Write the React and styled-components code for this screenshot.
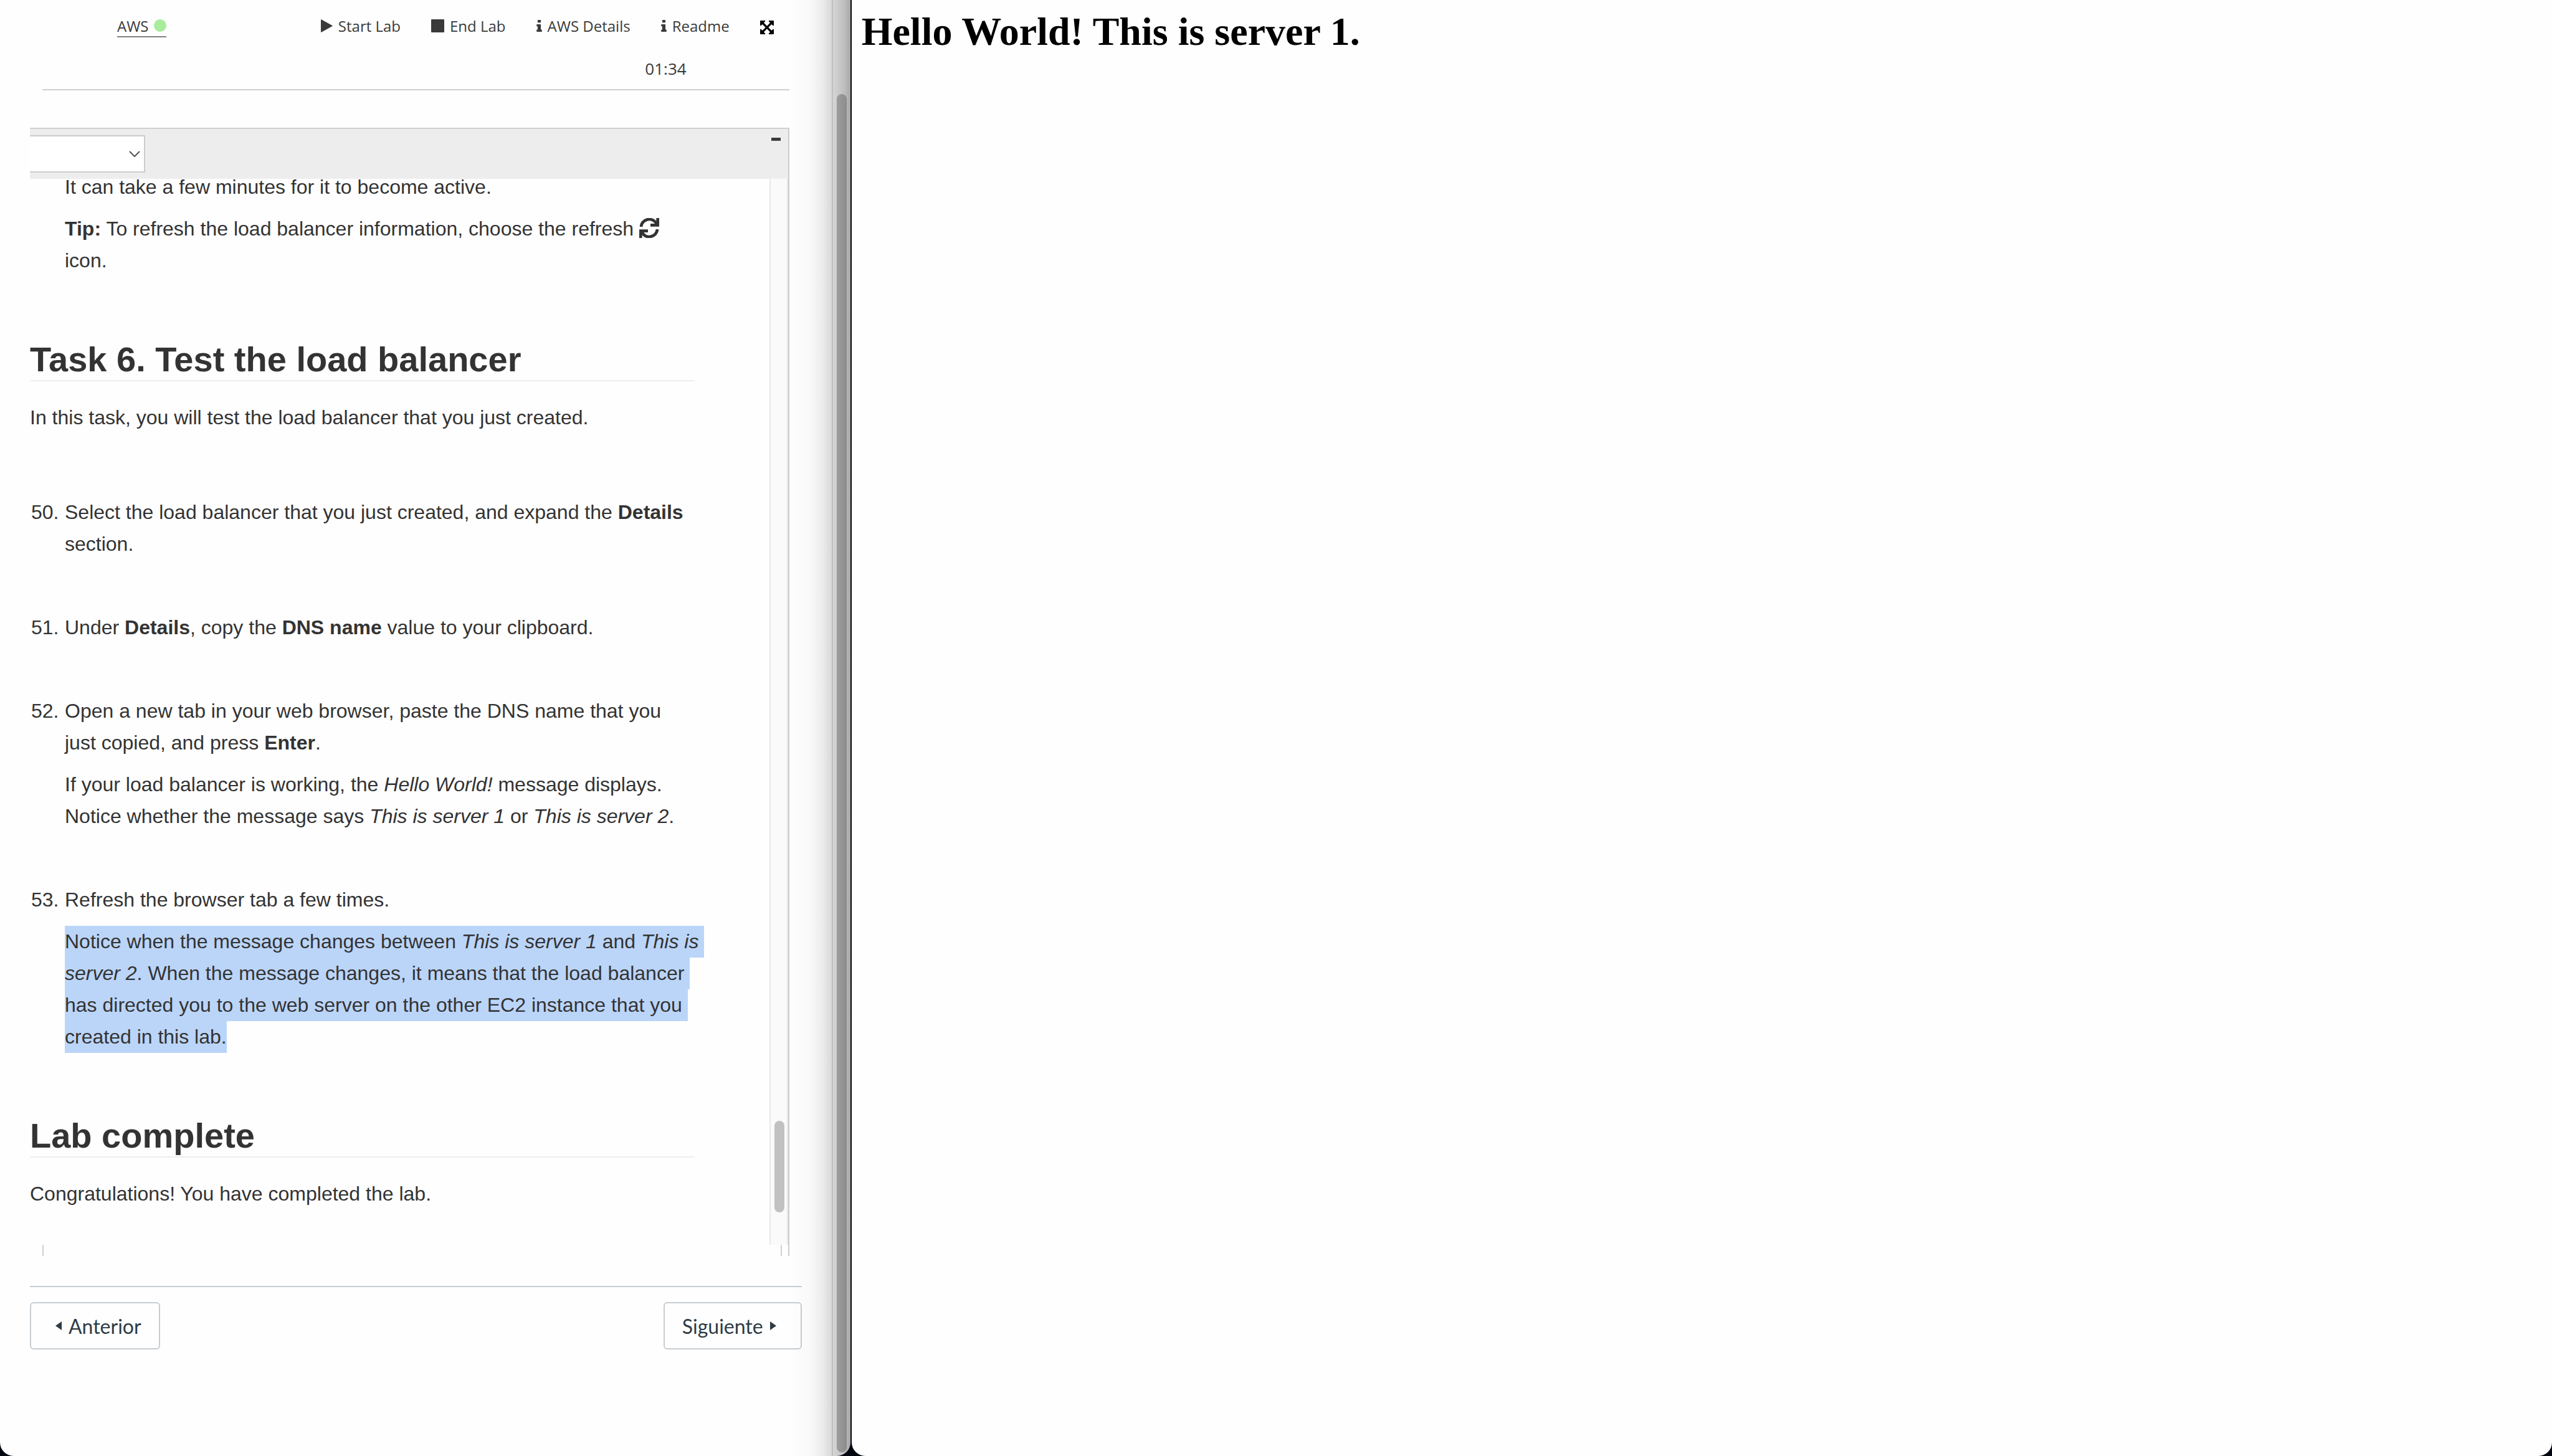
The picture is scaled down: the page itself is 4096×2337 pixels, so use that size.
import React, { useEffect, useRef } from "react";
import styled, { createGlobalStyle } from "styled-components";

const Global = createGlobalStyle`
  *, *::before, *::after { box-sizing: border-box; }
  html, body { margin: 0; padding: 0; background: #02060f; }
  body { overflow: hidden; }
`;

const Desktop = styled.div`
  display: grid;
  grid-template-columns: minmax(0, 1fr) minmax(0, 2fr);
  column-gap: 2px;
  height: 100vh;
  background: #02060f;
`;

const Window = styled.div`
  min-width: 0;
  overflow: hidden;
  background: #fefefe;
  border-radius: 0 0 22px 22px;
`;

const LabWindow = styled(Window)`
  display: flex;
  position: relative;
  font-family: "Liberation Sans", Arial, sans-serif;
  color: #333;
`;

/* shadow that the front window casts on the lab window */
const Shade = styled.div`
  position: absolute;
  top: 0;
  right: 0;
  bottom: 0;
  width: 100px;
  pointer-events: none;
  background: linear-gradient(to right, rgba(0,0,0,0), rgba(0,0,0,0.02) 35%, rgba(0,0,0,0.07) 55%, rgba(0,0,0,0.15) 70%, rgba(0,0,0,0.25) 90%, rgba(0,0,0,0.34));
`;

const LabPage = styled.main`
  flex: 1;
  min-width: 0;
  display: flex;
  flex-direction: column;
  padding: 0 48px;
`;

const OuterTrack = styled.div`
  flex: none;
  display: flex;
  width: 30px;
  padding: 151px 6px 6px;
  border-left: 2px solid #e2e2e2;
`;

const Thumb = styled.div`
  width: 16px;
  height: ${(p) => p.$height};
  border-radius: 8px;
  background: #c1c1c1;
`;

const LabHeader = styled.header`
  height: 145px;
  margin: 0 20px;
  border-bottom: 2px solid #d0d0d0;
  font-family: "Open Sans", "Noto Sans", sans-serif;
  font-size: 24px;
  color: #3a3a3a;
`;

const Bar = styled.nav`
  display: flex;
  align-items: flex-start;
  gap: 49px;
  padding: 24px 25px 0 120px;
`;

const AwsLink = styled.a`
  display: flex;
  align-items: center;
  gap: 8px;
  height: 36px;
  margin-right: auto;
  border-bottom: 2px solid #808080;
  color: inherit;
  text-decoration: none;
`;

const Dot = styled.span`
  width: 20px;
  height: 20px;
  border-radius: 50%;
  background: #a8ec9c;
`;

const BarButton = styled.button`
  display: flex;
  align-items: center;
  gap: 9px;
  height: 36px;
  padding: 0 0 2px;
  border: 0;
  background: none;
  font: inherit;
  color: inherit;
`;

const FullScreenButton = styled(BarButton)`
  height: 40px;
  padding: 0;
  color: #000;
`;

const Icon = styled.svg`
  display: block;
  flex: none;
  fill: currentColor;
`;

const Timer = styled.div`
  padding: 30px 165px 0 0;
  font-size: 26px;
  line-height: 32px;
  text-align: right;
`;

const Panel = styled.section`
  display: flex;
  flex-direction: column;
  margin: 60px 20px 0 0;
  border-right: 2px solid #ccc;
`;

const PanelBar = styled.div`
  display: flex;
  justify-content: space-between;
  align-items: flex-start;
  height: 82px;
  padding: 10px 9px 10px 0;
  background: #ededed;
  border-top: 2px solid #d0d0d0;
`;

const SelectWrap = styled.label`
  position: relative;
  width: 185px;
  height: 60px;
`;

const Select = styled.select`
  width: 100%;
  height: 100%;
  appearance: none;
  border: 2px solid #ccc;
  border-left: 0;
  border-radius: 0;
  background: #fff;
`;

const Chevron = styled.svg`
  position: absolute;
  right: 7px;
  top: 24px;
  width: 20px;
  height: 12px;
  pointer-events: none;
`;

const Collapse = styled.button`
  width: 21px;
  height: 13px;
  padding: 4px 3px;
  border: 0;
  background: #3a3a3a content-box;
`;

const Scroller = styled.div`
  display: flex;
  height: 1711px;
  overflow: hidden;
`;

const Article = styled.article`
  flex: 1;
  min-width: 0;
  margin-top: -12px;
  padding-right: 120px;
  font-size: 32px;
  line-height: 51px;
`;

const InnerTrack = styled.div`
  display: flex;
  align-items: flex-end;
  width: 30px;
  padding: 0 4px 52px 6px;
  border: solid #e8e8e8;
  border-width: 0 2px;
  background: #fafafa;
`;

const Text = styled.p`
  margin: 0 0 16px;
`;

const SelectedText = styled(Text)`
  margin-right: -12px;

  &::selection, & *::selection {
    background: rgba(186, 212, 249, 0.99);
    color: #333;
  }
`;

const Indented = styled.div`
  padding-left: 56px;
`;

const RefreshSvg = styled.svg`
  width: 32px;
  height: 32px;
  vertical-align: -4px;
  fill: none;
  stroke: #333;
  stroke-width: 14;
`;

const Title = styled.h2`
  margin: 100px 0 33px;
  border-bottom: 2px solid #eee;
  font-size: 56px;
  line-height: 66px;
  font-weight: 700;
`;

const Steps = styled.ol`
  margin: 101px 0 0;
  padding: 0;
  list-style: none;
  display: flex;
  flex-direction: column;
  gap: 83px;
`;

const Step = styled.li`
  display: grid;
  grid-template-columns: 56px minmax(0, 1fr);

  ${Text}:last-child { margin-bottom: 0; }
`;

const Num = styled.span`
  padding-left: 2px;
`;

const Ticks = styled.div`
  height: 18px;
  margin: 0 10px 0 20px;
  border: solid #d0d0d0;
  border-width: 0 2px;
`;

const Pager = styled.footer`
  display: flex;
  justify-content: space-between;
  margin-top: 48px;
  padding-top: 24px;
  border-top: 2px solid #c7cdd1;
`;

const PagerLink = styled.a`
  display: flex;
  align-items: center;
  gap: 11px;
  height: 76px;
  padding: ${(p) => (p.$next ? "0 39px 0 28px" : "0 28px 0 39px")};
  border: 2px solid #c7cdd1;
  border-radius: 6px;
  color: #2d3b45;
  font-family: Lato, sans-serif;
  font-size: 32px;
  text-decoration: none;
`;

const ServerTitle = styled.h1`
  margin: 0;
  padding: 14px 16px;
  font-family: "Liberation Serif", "Times New Roman", serif;
  font-size: 64px;
  line-height: 74px;
  color: #000;
`;

const PlayIcon = () => (
  <Icon width="19" height="21" viewBox="0 0 19 21"><path d="M0 .8Q0 0 .8.3L18.4 9.9q.8.6 0 1.2L.8 20.7Q0 21 0 20.2z" /></Icon>
);

const StopIcon = () => (
  <Icon width="21" height="21" viewBox="0 0 21 21"><rect width="21" height="21" rx="1" /></Icon>
);

const InfoIcon = () => (
  <Icon width="9" height="19" viewBox="0 128 640 1408">
    <path d="M640 1344v128q0 26-19 45t-45 19h-512q-26 0-45-19t-19-45v-128q0-26 19-45t45-19h64v-384h-64q-26 0-45-19t-19-45v-128q0-26 19-45t45-19h384q26 0 45 19t19 45v576h64q26 0 45 19t19 45zm-128-1152v192q0 26-19 45t-45 19h-256q-26 0-45-19t-19-45v-192q0-26 19-45t45-19h256q26 0 45 19t19 45z" />
  </Icon>
);

const ExpandIcon = () => (
  <Icon width="22" height="22" viewBox="128 128 1536 1536">
    <path d="M1411 541l-355 355 355 355 144-144q29-31 70-14 39 17 39 59v448q0 26-19 45t-45 19h-448q-42 0-59-40-17-39 14-69l144-144-355-355-355 355 144 144q31 30 14 69-17 40-59 40h-448q-26 0-45-19t-19-45v-448q0-42 40-59 39-17 69 14l144 144 355-355-355-355-144 144q-19 19-45 19-12 0-24-5-40-17-40-59v-448q0-26 19-45t45-19h448q42 0 59 40 17 39-14 69l-144 144 355 355 355-355-144-144q-31-30-14-69 17-40 59-40h448q26 0 45 19t19 45v448q0 42-39 59-13 5-25 5-26 0-45-19z" />
  </Icon>
);

const RefreshIcon = () => (
  <RefreshSvg viewBox="0 0 96 96" role="img" aria-label="refresh">
    <path d="M9 42A39 39 0 0 1 84 30M89 0V34H54" />
    <path d="M87 54A39 39 0 0 1 12 66M7 96V62H42" />
  </RefreshSvg>
);

const LeftArrow = () => (
  <Icon width="10" height="14" viewBox="0 0 10 14"><path d="M10 0v14L0 7z" /></Icon>
);

const RightArrow = () => (
  <Icon width="10" height="14" viewBox="0 0 10 14"><path d="M0 0v14l10-7z" /></Icon>
);

export default function App() {
  const selected = useRef(null);

  useEffect(() => {
    window.getSelection().selectAllChildren(selected.current);
  }, []);

  return (
    <Desktop>
      <Global />
      <LabWindow>
        <LabPage>
          <LabHeader>
            <Bar>
              <AwsLink href="#aws">AWS <Dot /></AwsLink>
              <BarButton><PlayIcon />Start Lab</BarButton>
              <BarButton><StopIcon />End Lab</BarButton>
              <BarButton><InfoIcon />AWS Details</BarButton>
              <BarButton><InfoIcon />Readme</BarButton>
              <FullScreenButton aria-label="Full screen"><ExpandIcon /></FullScreenButton>
            </Bar>
            <Timer>01:34</Timer>
          </LabHeader>
          <Panel>
            <PanelBar>
              <SelectWrap>
                <Select aria-label="Language" />
                <Chevron viewBox="0 0 20 12" fill="none" stroke="#555" strokeWidth="2">
                  <path d="M2 2l8 8 8-8" />
                </Chevron>
              </SelectWrap>
              <Collapse aria-label="Collapse" />
            </PanelBar>
            <Scroller>
              <Article>
                <Indented>
                  <Text>It can take a few minutes for it to become active.</Text>
                  <Text><b>Tip:</b> To refresh the load balancer information, choose the refresh <RefreshIcon /> icon.</Text>
                </Indented>
                <Title>Task 6. Test the load balancer</Title>
                <Text>In this task, you will test the load balancer that you just created.</Text>
                <Steps>
                  <Step>
                    <Num>50.</Num>
                    <div>
                      <Text>Select the load balancer that you just created, and expand the <b>Details</b> section.</Text>
                    </div>
                  </Step>
                  <Step>
                    <Num>51.</Num>
                    <div>
                      <Text>Under <b>Details</b>, copy the <b>DNS name</b> value to your clipboard.</Text>
                    </div>
                  </Step>
                  <Step>
                    <Num>52.</Num>
                    <div>
                      <Text>Open a new tab in your web browser, paste the DNS name that you just copied, and press <b>Enter</b>.</Text>
                      <Text>If your load balancer is working, the <i>Hello World!</i> message displays. Notice whether the message says <i>This is server 1</i> or <i>This is server 2</i>.</Text>
                    </div>
                  </Step>
                  <Step>
                    <Num>53.</Num>
                    <div>
                      <Text>Refresh the browser tab a few times.</Text>
                      <SelectedText ref={selected}>Notice when the message changes between <i>This is server 1</i> and <i>This is server 2</i>. When the message changes, it means that the load balancer has directed you to the web server on the other EC2 instance that you created in this lab.</SelectedText>
                    </div>
                  </Step>
                </Steps>
                <Title>Lab complete</Title>
                <Text>Congratulations! You have completed the lab.</Text>
              </Article>
              <InnerTrack><Thumb $height="147px" /></InnerTrack>
            </Scroller>
            <Ticks />
          </Panel>
          <Pager>
            <PagerLink href="#prev"><LeftArrow />Anterior</PagerLink>
            <PagerLink href="#next" $next>Siguiente<RightArrow /></PagerLink>
          </Pager>
        </LabPage>
        <OuterTrack><Thumb $height="100%" /></OuterTrack>
        <Shade />
      </LabWindow>
      <Window>
        <ServerTitle>Hello World! This is server 1.</ServerTitle>
      </Window>
    </Desktop>
  );
}
